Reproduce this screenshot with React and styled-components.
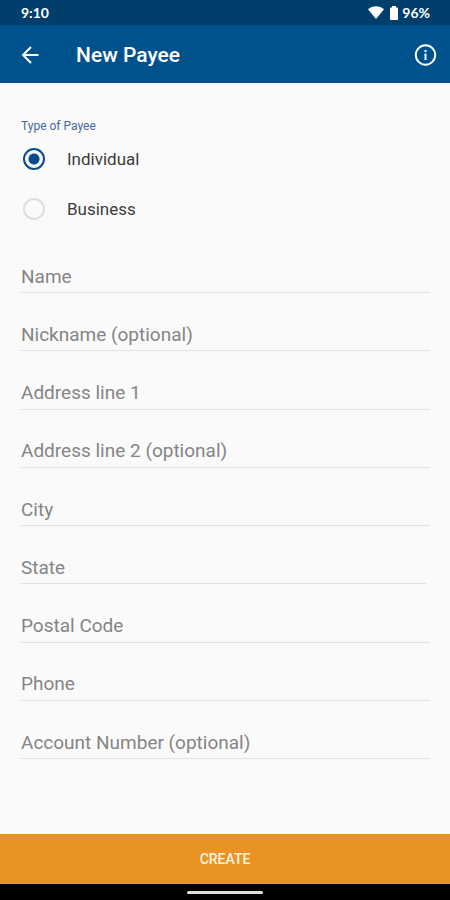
import { useState } from "react";
import styled, { createGlobalStyle } from "styled-components";

const GlobalStyle = createGlobalStyle`
* {
  box-sizing: border-box;
}
body {
  margin: 0;
  background: #fafafa;
  font-family: Roboto, "Liberation Sans", sans-serif;
}
`;

const Screen = styled.div`
  display: flex;
  flex-direction: column;
  min-height: 100vh;
`;

const StatusBar = styled.div`
  display: flex;
  align-items: center;
  justify-content: space-between;
  height: 25px;
  padding: 0 20px 0 21px;
  background: #003e6b;
  color: #fff;
  font-family: Lato, sans-serif;
  font-size: 14px;
  font-weight: 700;
`;

const StatusIcons = styled.div`
  display: flex;
  align-items: center;
  gap: 4px;
`;

const AppBar = styled.header`
  display: flex;
  align-items: center;
  height: 58px;
  padding: 2px 13px 0 18px;
  background: #00528c;
  color: #fff;
`;

const IconButton = styled.button`
  display: flex;
  padding: 0;
  border: 0;
  background: none;
  color: inherit;
  cursor: pointer;
`;

const Title = styled.h1`
  flex: 1;
  margin: 0 0 0 33px;
  font-size: 21px;
  font-weight: 500;
`;

const Form = styled.form`
  flex: 1;
  display: flex;
  flex-direction: column;
`;

const TypeGroup = styled.fieldset`
  margin: 0;
  padding: 0 21px;
  border: 0;
`;

const Legend = styled.legend`
  padding: 35px 0 0;
  color: #48699a;
  font-size: 12px;
  line-height: 16px;
`;

const Option = styled.label`
  display: flex;
  align-items: center;
  gap: 22px;
  height: 50px;
  padding-left: 2px;
  color: #3c3c3c;
  font-size: 17px;
`;

const Radio = styled.input`
  appearance: none;
  width: 22px;
  height: 22px;
  margin: 0;
  border: 2px solid #dedede;
  border-radius: 50%;

  &:checked {
    border-color: #0b4a8b;
    background: radial-gradient(circle, #0b4a8b 5px, transparent 6px);
  }
`;

const Fields = styled.div`
  flex: 1;
  display: flex;
  flex-direction: column;
  justify-content: space-between;
  gap: 8px;
  padding: 26px 20px 75px 21px;
`;

// label and input share one grid cell, the label goes away once there is a value
const Field = styled.div`
  display: grid;
  align-items: center;
  margin-right: ${(props) => (props.$short ? "4px" : "0")};
  border-bottom: 1px solid #e1e1e1;
`;

const FieldLabel = styled.label`
  grid-area: 1 / 1;
  padding-top: 1px;
  color: #858585;
  font-size: 19px;
  line-height: 24px;
  pointer-events: none;
  visibility: ${(props) => (props.$filled ? "hidden" : "visible")};
`;

const TextInput = styled.input`
  grid-area: 1 / 1;
  width: 100%;
  height: 32px;
  padding: 0;
  border: 0;
  outline: 0;
  background: transparent;
  color: #3c3c3c;
  font-family: inherit;
  font-size: 19px;
`;

const CreateButton = styled.button`
  height: 50px;
  border: 0;
  background: #e99422;
  color: #fff4e4;
  font-family: inherit;
  font-size: 14px;
  font-weight: 500;
  cursor: pointer;
`;

const NavBar = styled.div`
  display: flex;
  justify-content: center;
  padding: 7px 0 6px;
  background: #000;
`;

const NavHandle = styled.div`
  width: 76px;
  height: 3px;
  border-radius: 2px;
  background: #dedede;
`;

const fields = [
  { id: "name", label: "Name" },
  { id: "nickname", label: "Nickname (optional)" },
  { id: "address1", label: "Address line 1" },
  { id: "address2", label: "Address line 2 (optional)" },
  { id: "city", label: "City" },
  { id: "state", label: "State", short: true },
  { id: "postal", label: "Postal Code" },
  { id: "phone", label: "Phone" },
  { id: "account", label: "Account Number (optional)" },
];

function App() {
  const [type, setType] = useState("Individual");
  const [values, setValues] = useState({});

  const handleChange = (e) => {
    setValues({ ...values, [e.target.name]: e.target.value });
  };

  return (
    <Screen>
      <GlobalStyle />
      <StatusBar>
        <span>9:10</span>
        <StatusIcons>
          <svg width="16" height="13" viewBox="0 0 16 13" fill="#fff">
            <path d="M0 3.2C4.6-.8 11.4-.8 16 3.2L8 13z" />
          </svg>
          <svg width="10" height="14" viewBox="0 0 10 14" fill="#fff">
            <path d="M4 0h4v1.5h1.2c.5 0 .8.3.8.8v10.9c0 .5-.3.8-.8.8H2.800c-.5 0-.8-.3-.8-.8V2.300c0-.5.3-.8.8-.8H4z" />
          </svg>
          <span>96%</span>
        </StatusIcons>
      </StatusBar>

      <AppBar>
        <IconButton type="button" aria-label="Back">
          <svg width="25" height="24" viewBox="0 0 25 24" fill="none" stroke="#fff" strokeWidth="2">
            <path d="M20.500 12H5.500M13 4l-8 8 8 8" />
          </svg>
        </IconButton>
        <Title>New Payee</Title>
        <IconButton type="button" aria-label="Information">
          <svg width="24" height="24" viewBox="0 0 24 24" fill="none" stroke="#fff" strokeWidth="2">
            <circle cx="12.500" cy="12" r="9.700" />
            <path d="M12.500 10.500v6.500M12.500 7v2" />
          </svg>
        </IconButton>
      </AppBar>

      <Form onSubmit={(e) => e.preventDefault()}>
        <TypeGroup>
          <Legend>Type of Payee</Legend>
          {["Individual", "Business"].map((option) => (
            <Option key={option}>
              <Radio
                type="radio"
                name="type"
                value={option}
                checked={type === option}
                onChange={() => setType(option)}
              />
              {option}
            </Option>
          ))}
        </TypeGroup>

        <Fields>
          {fields.map((field) => (
            <Field key={field.id} $short={field.short}>
              <TextInput
                id={field.id}
                name={field.id}
                type="text"
                value={values[field.id] || ""}
                onChange={handleChange}
              />
              <FieldLabel htmlFor={field.id} $filled={Boolean(values[field.id])}>
                {field.label}
              </FieldLabel>
            </Field>
          ))}
        </Fields>

        <CreateButton type="submit">CREATE</CreateButton>
      </Form>

      <NavBar>
        <NavHandle />
      </NavBar>
    </Screen>
  );
}

export default App;
